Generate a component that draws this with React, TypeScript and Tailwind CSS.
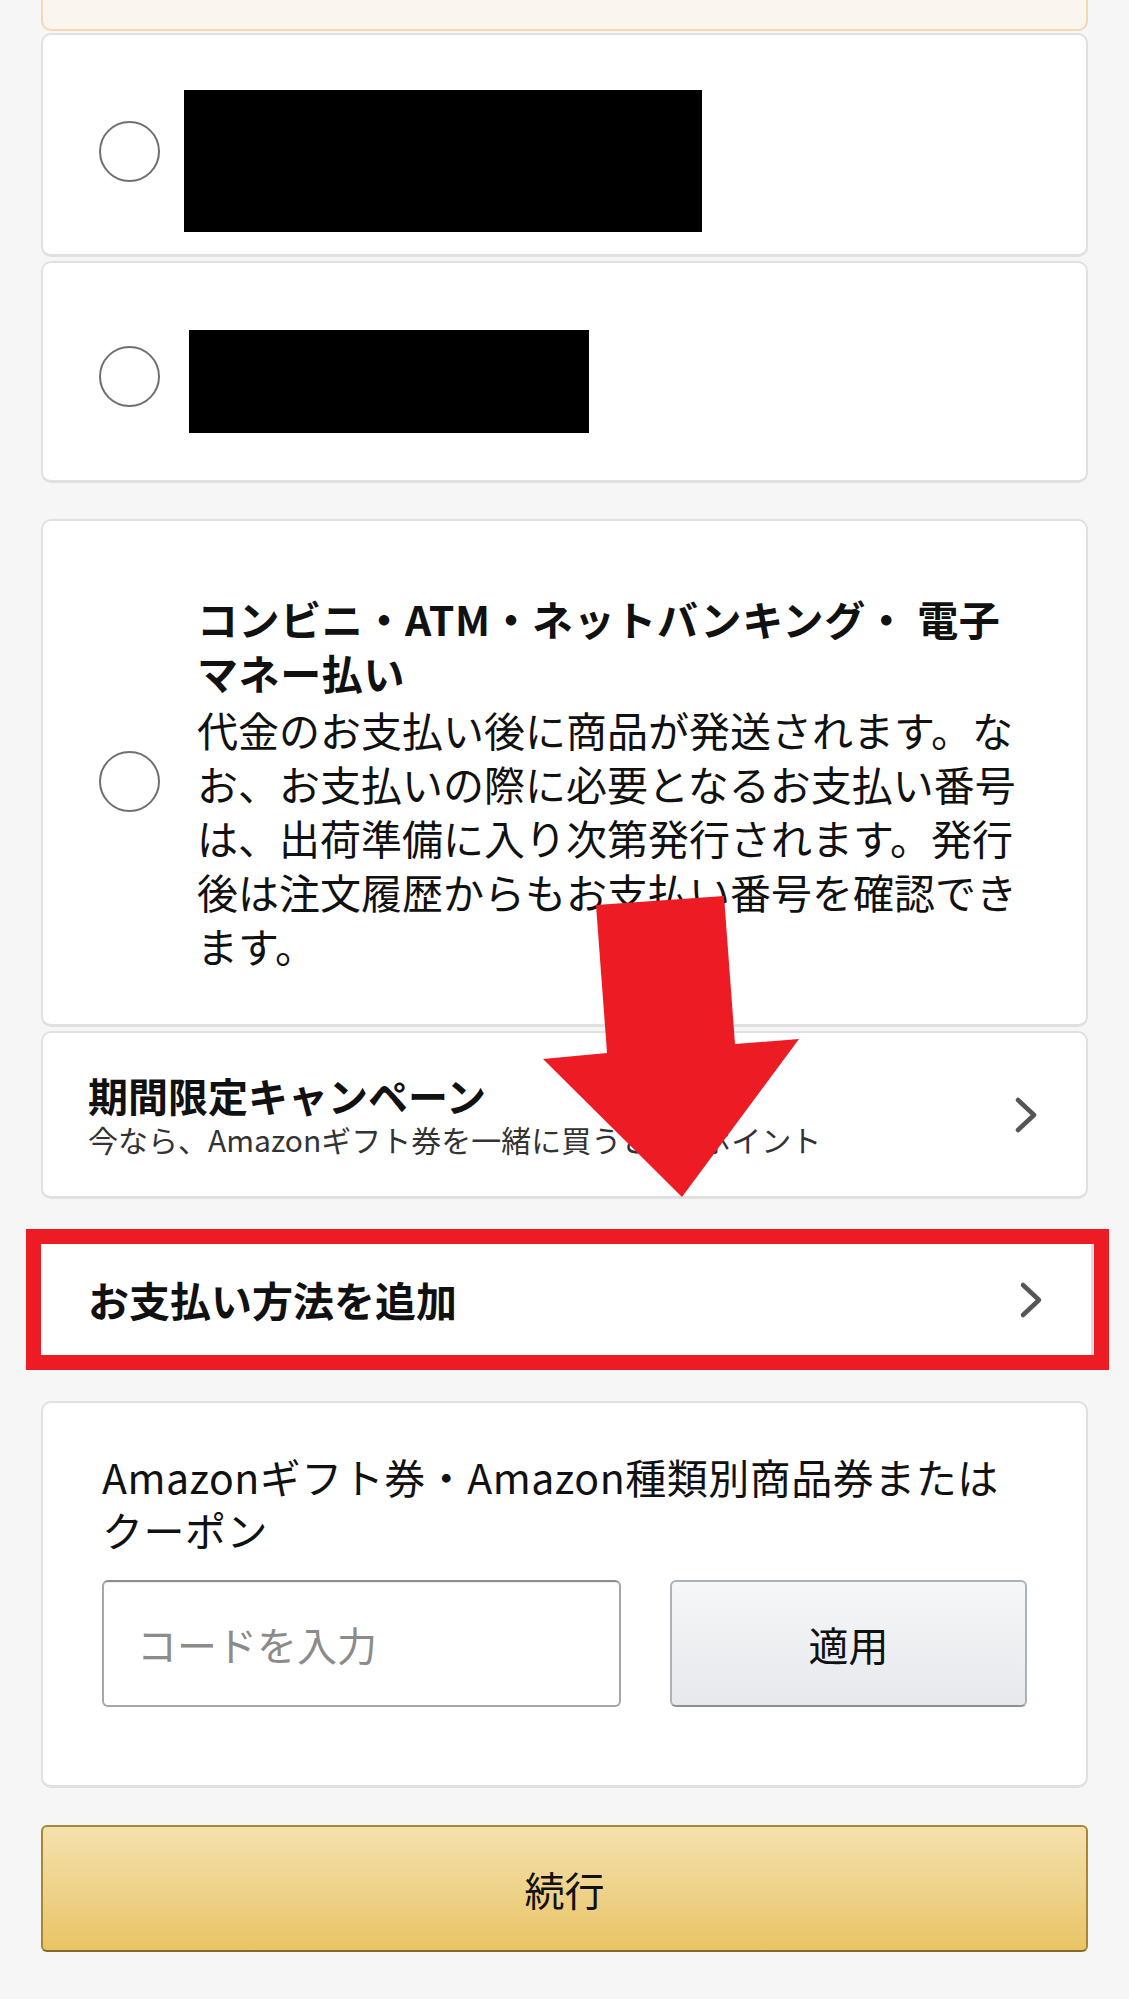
import { useState } from "react";

const jp = "font-['Noto_Sans_CJK_JP','Noto_Sans',sans-serif]";

function Radio() {
	return <div className="w-[61px] h-[61px] shrink-0 rounded-full border-[2.5px] border-[#707070] bg-white" />;
}

function Chevron() {
	return (
		<svg width="26" height="38" viewBox="0 0 26 38" className="shrink-0">
			<polyline points="4,4 20,19 4,34" fill="none" stroke="#555" strokeWidth="4.5" strokeLinecap="round" strokeLinejoin="round" />
		</svg>
	);
}

const card = "bg-white border-2 border-b-[3px] border-[#e0e0e0] rounded-[10px]";

export default function App() {
	const [code, setCode] = useState("");
	return (
		<div className={`relative min-h-[1999px] bg-[#f6f6f6] px-[41px] text-[#111] ${jp}`}>
			{/* bottom of the previous (selected) option */}
			<div className="h-[31px] bg-[#faf5ef] border-2 border-t-0 border-[#f5d7b2] rounded-b-[10px]" />

			<div className={`${card} mt-[2px] h-[224px] flex items-start pl-[56px] pt-[55px]`}>
				<div className="mt-[31px]">
					<Radio />
				</div>
				<div className="ml-[24px] w-[518px] h-[142px] bg-black" />
			</div>

			<div className={`${card} mt-[4px] h-[222px] flex items-start pl-[56px] pt-[67px]`}>
				<div className="mt-[16px]">
					<Radio />
				</div>
				<div className="ml-[29px] w-[400px] h-[103px] bg-black" />
			</div>

			<div className={`${card} mt-[36px] flex items-center pl-[56px] pt-[70px] pb-[52px]`}>
				<Radio />
				<div className="ml-[37px] text-[41px] leading-[54px] whitespace-nowrap">
					<p className="font-bold mb-[3px] tracking-[0.6px]">
						コンビニ・ATM・ネットバンキング・ 電子
						<br />
						マネー払い
					</p>
					<p>
						代金のお支払い後に商品が発送されます。な
						<br />
						お、お支払いの際に必要となるお支払い番号
						<br />
						は、出荷準備に入り次第発行されます。発行
						<br />
						後は注文履歴からもお支払い番号を確認でき
						<br />
						ます。
					</p>
				</div>
			</div>

			<div className={`${card} mt-[4px] h-[168px] flex items-center justify-between pl-[45px] pr-[46px]`}>
				<div>
					<p className="text-[40px] leading-[48px] font-bold">期間限定キャンペーン</p>
					<p className="text-[30px] leading-[40px] text-[#333]">今なら、Amazonギフト券を一緒に買うと500ポイント</p>
				</div>
				<Chevron />
			</div>

			<div className="mt-[30px] -ml-[15px] -mr-[21px] border-[15px] border-[#ed1c24]">
				<div className="h-[111px] bg-white border-r-[3px] border-[#e0e0e0] flex items-center justify-between pl-[47px] pr-[46px]">
					<p className="text-[41px] font-bold">お支払い方法を追加</p>
					<Chevron />
				</div>
			</div>

			<div className={`${card} mt-[31px] pl-[59px] pr-[40px] pt-[47px] pb-[78px]`}>
				<p className="text-[41px] leading-[53px] tracking-[0.5px] whitespace-nowrap">
					Amazonギフト券・Amazon種類別商品券または
					<br />
					クーポン
				</p>
				<div className="mt-[24px] flex gap-[49px]">
					<input
						value={code}
						onChange={(e) => setCode(e.target.value)}
						placeholder="コードを入力"
						className="w-[519px] h-[127px] rounded-[6px] border-2 border-[#a6a6a6] border-t-[#8e8e8e] bg-white pl-[33px] text-[40px] outline-none placeholder:text-[#8b8b8b] shadow-[inset_0_1px_0_rgba(0,0,0,0.07)]"
					/>
					<button className="w-[357px] h-[127px] rounded-[6px] border-2 border-[#adb1b8] border-b-[#8d9096] bg-gradient-to-b from-[#f6f7f9] to-[#e6e8eb] text-[40px] text-[#111]">
						適用
					</button>
				</div>
			</div>

			<button className="mt-[37px] w-full h-[127px] rounded-[6px] border-2 border-[#a88734] border-b-[#846a29] bg-gradient-to-b from-[#f5e1ad] to-[#e9c465] text-[40px] text-[#111]">
				続行
			</button>

			{/* annotation arrow */}
			<svg className="absolute left-[540px] top-[890px] pointer-events-none" width="265" height="312" viewBox="0 0 265 312">
				<polygon points="56,15 184,6 195,154 259,149 142,307 3,169 67,163" fill="#ed1c24" />
			</svg>
		</div>
	);
}
